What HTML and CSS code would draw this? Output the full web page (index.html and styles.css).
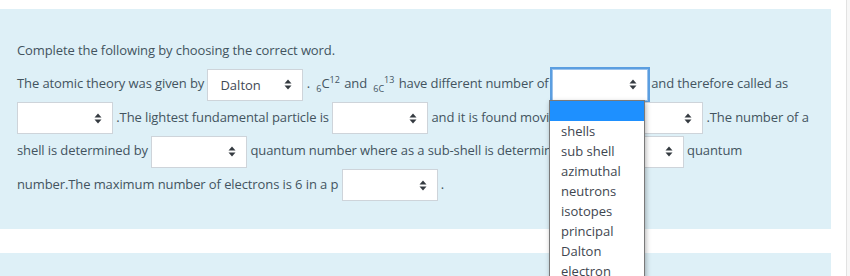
FILE: index.html
```html
<!DOCTYPE html>
<html lang="en">
<head>
    <meta charset="UTF-8">
    <meta name="viewport" content="width=device-width, initial-scale=1.0">
    <title>Cloze question</title>
    <link rel="stylesheet" href="styles.css">
</head>
<body>
    <div class="page">
        <div class="que">
            <p class="prompt">Complete the following by choosing the correct word.</p>
            <p class="cloze">The atomic theory was given by <select class="gap"><option>Dalton</option></select> . <sub>6</sub>C<sup>12</sup> and <sub>6C</sub><sup>13</sup> have different number of <select class="gap gap-focus"><option></option></select> and therefore called as<br>
            <select class="gap"><option></option></select> .The lightest fundamental particle is <select class="gap"><option></option></select> and it is found moving round <select class="gap"><option></option></select> .The number of a<br>
            shell is determined by <select class="gap"><option></option></select> quantum number where as a sub-shell is determined by <select class="gap"><option></option></select> quantum<br>
            number.The maximum number of electrons is 6 in a p <select class="gap"><option></option></select> .</p>
        </div>
        <div class="que que-next"></div>

        <!-- open list of the focused gap -->
        <ul class="dropdown">
            <li class="selected">&nbsp;</li>
            <li>shells</li>
            <li>sub shell</li>
            <li>azimuthal</li>
            <li>neutrons</li>
            <li>isotopes</li>
            <li>principal</li>
            <li>Dalton</li>
            <li>electron</li>
        </ul>
    </div>
    <div class="scroll-track"></div>
</body>
</html>
```

FILE: styles.css
```css
body {
    margin: 0;
    font-family: "Open Sans", "Noto Sans", sans-serif;
    font-size: 13px;
    color: #43545f;
    background: #fff;
    overflow: hidden;
}
.page {
    position: relative;
    padding-top: 9px;
    width: 831px;
}
.que {
    background-color: #def0f7;
    padding: 25px 17px 28px 17px;
}
.que-next {
    margin-top: 24px;
    height: 40px;
    padding: 0;
}
.prompt,
.cloze {
    margin: 0;
    line-height: 33px;
    letter-spacing: -0.1px;
}
.cloze {
    white-space: nowrap;
}
.cloze sub,
.cloze sup {
    font-size: 9px;
    line-height: 0;
    letter-spacing: 0;
}
.cloze sub {
    margin-left: 3px;
}
.cloze sup {
    margin-right: 1px;
}
select.gap {
    -webkit-appearance: none;
    appearance: none;
    width: 96px;
    height: 32px;
    vertical-align: middle;
    margin: 0;
    padding: 0 24px 0 12px;
    font-family: inherit;
    font-size: 13px;
    color: #3f4a55;
    background-color: #fff;
    background-image: url("data:image/svg+xml;utf8,<svg xmlns='http://www.w3.org/2000/svg' width='8' height='11' viewBox='0 0 8 11'><path d='M4 0.5 L7.5 4.5 H0.5 Z M4 10.5 L7.5 6.5 H0.5 Z' fill='%23343a40'/></svg>");
    background-repeat: no-repeat;
    background-position: right 10px center;
    border: 1px solid #ced4da;
    border-radius: 0;
}
select.gap-focus {
    border-color: #9cc3ec;
    box-shadow: 0 0 0 2px #5b9ee0;
    outline: none;
}
.dropdown {
    position: absolute;
    left: 549px;
    top: 100px;
    width: 94px;
    margin: 0;
    padding: 0;
    list-style: none;
    background: #fff;
    border: 1px solid #7a7a7a;
    box-shadow: 1px 2px 5px rgba(0, 0, 0, 0.3);
}
.dropdown li {
    height: 20px;
    line-height: 20px;
    padding-left: 11px;
    font-size: 13px;
    color: #3e4650;
}
.dropdown li.selected {
    background-color: #1e90ff;
}
.scroll-track {
    position: fixed;
    top: 0;
    right: 0;
    width: 3px;
    height: 100%;
    background: #f7f7f7;
    border-left: 1px solid #e2e2e2;
}
```
